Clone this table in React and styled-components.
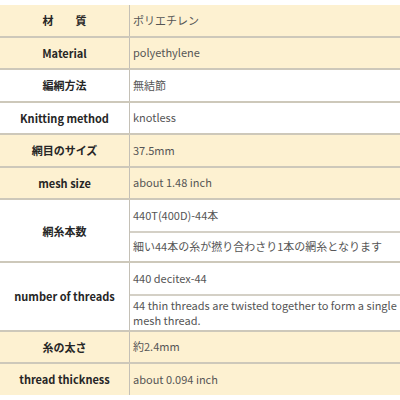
import React from 'react'
import styled, { createGlobalStyle } from 'styled-components'

const Global = createGlobalStyle`
  html, body {
    margin: 0;
    padding: 0;
    background: #fff;
  }
  body {
    font-family: "Noto Sans CJK JP", "Noto Sans", sans-serif;
  }
`

const Table = styled.div`
  margin-top: 5px;
  width: 400px;
  display: flex;
  flex-direction: column;
`

const Row = styled.div`
  display: grid;
  grid-template-columns: 130px 1fr;
  background: ${p => (p.$tint ? '#fdf1d1' : '#ffffff')};
  border-bottom: ${p => (p.$last ? 'none' : '2px solid #cdc8ba')};
`

const Label = styled.div`
  display: flex;
  align-items: center;
  justify-content: center;
  border-right: 1px solid #c4c0b6;
  font-size: 11px;
  font-weight: 700;
  color: #262626;
  white-space: pre;
`

const Values = styled.div`
  display: flex;
  flex-direction: column;
`

const Value = styled.div`
  min-height: 30.5px;
  display: flex;
  align-items: center;
  padding: 2px 0 2px 3px;
  box-sizing: border-box;
  font-size: 11px;
  line-height: 15px;
  color: #555;
  & + & {
    border-top: 2px solid #d4d0c6;
  }
`

const rows = [
  { label: '材　　質', values: ['ポリエチレン'], tint: true },
  { label: 'Material', values: ['polyethylene'], tint: true },
  { label: '編網方法', values: ['無結節'] },
  { label: 'Knitting method', values: ['knotless'] },
  { label: '網目のサイズ', values: ['37.5mm'], tint: true },
  { label: 'mesh size', values: ['about 1.48 inch'], tint: true },
  { label: '網糸本数', values: ['440T(400D)-44本', '細い44本の糸が撚り合わさり1本の網糸となります'] },
  {
    label: 'number of threads',
    values: ['440 decitex-44', '44 thin threads are twisted together to form a single mesh thread.'],
  },
  { label: '糸の太さ', values: ['約2.4mm'], tint: true },
  { label: 'thread thickness', values: ['about 0.094 inch'], tint: true },
]

export default function App() {
  return (
    <>
      <Global />
      <Table>
        {rows.map((r, i) => (
          <Row key={i} $tint={r.tint} $last={i === rows.length - 1}>
            <Label>{r.label}</Label>
            <Values>
              {r.values.map((v, j) => (
                <Value key={j}>{v}</Value>
              ))}
            </Values>
          </Row>
        ))}
      </Table>
    </>
  )
}
